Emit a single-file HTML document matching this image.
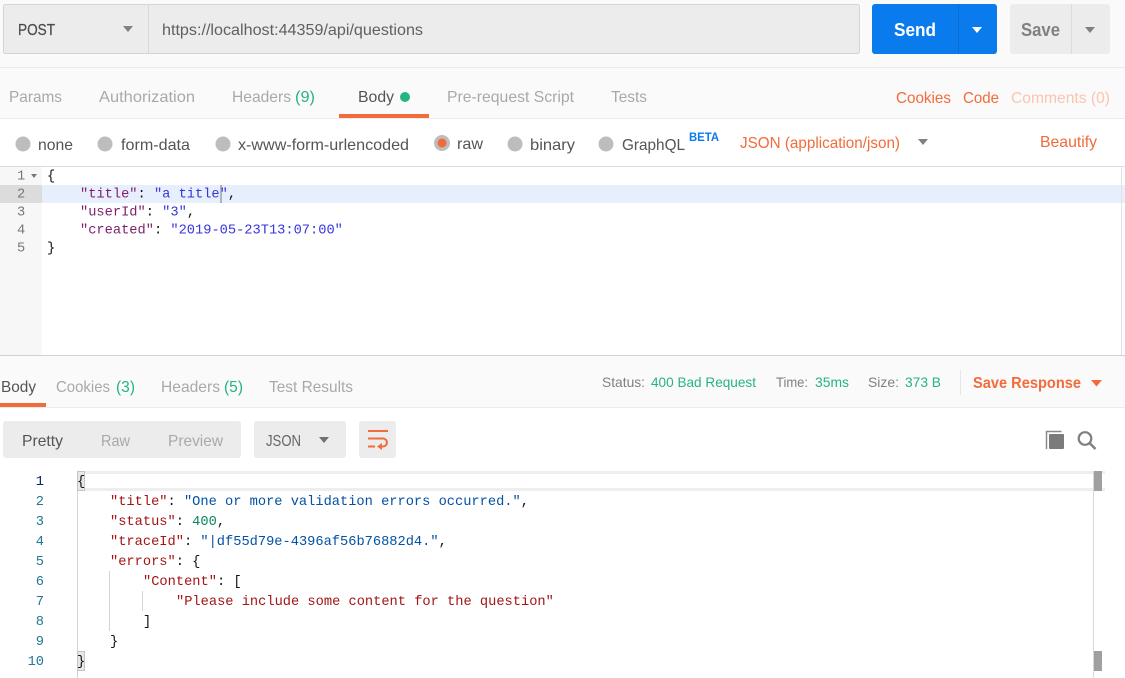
<!DOCTYPE html>
<html><head><meta charset="utf-8"><style>
html,body{margin:0;padding:0;background:#fff;width:1125px;height:678px;overflow:hidden}
svg{display:block}
text{white-space:pre}
.s{font-family:"Liberation Sans",sans-serif;font-size:16px}
.m{font-family:"Liberation Mono",monospace;font-size:13.7px}
.g{fill:#a9a9a9}.d{fill:#555}.o{fill:#f26b3a}.t{fill:#26b47f}
.pk{fill:#7f1d6a}.pv{fill:#3636dd}.k{fill:#a31515}.v{fill:#0451a5}.n{fill:#09885a}.b{fill:#111}
.ln{fill:#237893}
</style></head><body>
<svg width="1125" height="678" viewBox="0 0 1125 678" xmlns="http://www.w3.org/2000/svg">
<!-- top -->
<rect x="0" y="0" width="1125" height="118" fill="#fafafa"/>
<rect x="3.5" y="4.5" width="856" height="49" rx="2" fill="#ececec" stroke="#d4d4d4"/>
<rect x="148" y="5" width="1" height="48" fill="#d9d9d9"/>
<text class="s" x="18" y="35" fill="#4a4a4a" stroke="#4a4a4a" stroke-width="0.25" textLength="37" lengthAdjust="spacingAndGlyphs">POST</text>
<path d="M123 26h10l-5 6z" fill="#808080"/>
<text class="s" x="162" y="35" fill="#606060" textLength="261" lengthAdjust="spacingAndGlyphs">https://localhost:44359/api/questions</text>
<rect x="872" y="4" width="125" height="50" rx="3" fill="#097bed"/>
<rect x="958" y="4" width="1" height="50" fill="#0a6fd4"/>
<text class="s" x="894" y="36" fill="#fff" font-weight="bold" textLength="42" lengthAdjust="spacingAndGlyphs" style="font-size:18.500px">Send</text>
<path d="M972 27h10l-5 6z" fill="#fff"/>
<rect x="1010" y="4" width="100" height="50" rx="3" fill="#ececec"/>
<rect x="1071" y="4" width="1" height="50" fill="#dcdcdc"/>
<text class="s" x="1021" y="36" fill="#808080" font-weight="bold" textLength="39" lengthAdjust="spacingAndGlyphs" style="font-size:18.500px">Save</text>
<path d="M1085 27h10l-5 6z" fill="#808080"/>
<rect x="0" y="67" width="1125" height="1" fill="#ececec"/>
<rect x="0" y="118" width="1125" height="1" fill="#ececec"/>
<!-- tabs -->
<text class="s g" x="9" y="102" textLength="53" lengthAdjust="spacingAndGlyphs">Params</text>
<text class="s g" x="99" y="102" textLength="96" lengthAdjust="spacingAndGlyphs">Authorization</text>
<text class="s g" x="232" y="102" textLength="59" lengthAdjust="spacingAndGlyphs">Headers</text>
<text class="s t" x="295" y="102" textLength="20" lengthAdjust="spacingAndGlyphs">(9)</text>
<text class="s d" x="358" y="102" textLength="36" lengthAdjust="spacingAndGlyphs">Body</text>
<circle cx="405" cy="97" r="5" fill="#26b47f"/>
<rect x="339" y="114" width="90" height="4" fill="#f26b3a"/>
<text class="s g" x="447" y="102" textLength="127" lengthAdjust="spacingAndGlyphs">Pre-request Script</text>
<text class="s g" x="611" y="102" textLength="36" lengthAdjust="spacingAndGlyphs">Tests</text>
<text class="s o" x="896" y="103" textLength="55" lengthAdjust="spacingAndGlyphs">Cookies</text>
<text class="s o" x="963" y="103" textLength="36" lengthAdjust="spacingAndGlyphs">Code</text>
<text class="s" fill="#fbc4b0" x="1011" y="103" textLength="99" lengthAdjust="spacingAndGlyphs">Comments (0)</text>
<!-- radios -->
<circle cx="23" cy="144" r="7.5" fill="#bdbdbd"/>
<text class="s d" x="38" y="150" textLength="35" lengthAdjust="spacingAndGlyphs">none</text>
<circle cx="105" cy="144" r="7.5" fill="#bdbdbd"/>
<text class="s d" x="121" y="150" textLength="69" lengthAdjust="spacingAndGlyphs">form-data</text>
<circle cx="223" cy="144" r="7.5" fill="#bdbdbd"/>
<text class="s d" x="238" y="150" textLength="171" lengthAdjust="spacingAndGlyphs">x-www-form-urlencoded</text>
<circle cx="442" cy="143" r="8" fill="#bdbdbd"/><circle cx="442" cy="143" r="4.5" fill="#f26b3a"/>
<text class="s d" x="457" y="149" textLength="26" lengthAdjust="spacingAndGlyphs">raw</text>
<circle cx="515" cy="144" r="7.5" fill="#bdbdbd"/>
<text class="s d" x="530" y="150" textLength="45" lengthAdjust="spacingAndGlyphs">binary</text>
<circle cx="606" cy="144" r="7.5" fill="#bdbdbd"/>
<text class="s d" x="622" y="150" textLength="63" lengthAdjust="spacingAndGlyphs">GraphQL</text>
<text class="s" x="689" y="141" fill="#097bed" font-weight="bold" textLength="30" lengthAdjust="spacingAndGlyphs" style="font-size:12px">BETA</text>
<text class="s o" x="740" y="148" textLength="160" lengthAdjust="spacingAndGlyphs">JSON (application/json)</text>
<path d="M918 139h10l-5 6z" fill="#808080"/>
<text class="s o" x="1040" y="147" textLength="57" lengthAdjust="spacingAndGlyphs">Beautify</text>
<!-- request editor -->
<rect x="0" y="166" width="1125" height="1" fill="#dcdcdc"/>
<rect x="0" y="167" width="42" height="188" fill="#f7f7f7"/>
<rect x="0" y="185" width="42" height="18" fill="#dcdcdc"/>
<rect x="42" y="185" width="1083" height="18" fill="#e6effb"/>
<rect x="220" y="185" width="2" height="18" fill="#a9b4bf"/>
<g class="m" fill="#777">
<text x="17" y="179.500">1</text><text x="17" y="197.500">2</text><text x="17" y="215.500">3</text><text x="17" y="233.500">4</text><text x="17" y="251.500">5</text>
</g>
<path d="M31 174h6l-3 4z" fill="#777"/>
<text class="m b" x="47" y="179.500">{</text>
<text class="m" x="80" y="197.500"><tspan class="pk">"title"</tspan><tspan class="b">: </tspan><tspan class="pv">"a title"</tspan><tspan class="b">,</tspan></text>
<text class="m" x="80" y="215.500"><tspan class="pk">"userId"</tspan><tspan class="b">: </tspan><tspan class="pv">"3"</tspan><tspan class="b">,</tspan></text>
<text class="m" x="80" y="233.500"><tspan class="pk">"created"</tspan><tspan class="b">: </tspan><tspan class="pv">"2019-05-23T13:07:00"</tspan></text>
<text class="m b" x="47" y="251.500">}</text>
<rect x="0" y="355" width="1125" height="1" fill="#d2d2d2"/>
<rect x="1121" y="167" width="1" height="188" fill="#e2e2e2"/>
<!-- response bar -->
<rect x="0" y="356" width="1125" height="51" fill="#fafafa"/>
<rect x="0" y="407" width="1125" height="1" fill="#ececec"/>
<text class="s d" x="1" y="392" textLength="35" lengthAdjust="spacingAndGlyphs">Body</text>
<rect x="0" y="403" width="46" height="4" fill="#f26b3a"/>
<text class="s g" x="56" y="392" textLength="54" lengthAdjust="spacingAndGlyphs">Cookies</text>
<text class="s t" x="116" y="392" textLength="19" lengthAdjust="spacingAndGlyphs">(3)</text>
<text class="s g" x="161" y="392" textLength="59" lengthAdjust="spacingAndGlyphs">Headers</text>
<text class="s t" x="224" y="392" textLength="19" lengthAdjust="spacingAndGlyphs">(5)</text>
<text class="s g" x="269" y="392" textLength="84" lengthAdjust="spacingAndGlyphs">Test Results</text>
<g style="font-family:'Liberation Sans',sans-serif;font-size:14px">
<text x="602" y="387" fill="#808080" textLength="43" lengthAdjust="spacingAndGlyphs">Status:</text>
<text class="t" x="651" y="387" textLength="105" lengthAdjust="spacingAndGlyphs">400 Bad Request</text>
<text x="776" y="387" fill="#808080" textLength="32" lengthAdjust="spacingAndGlyphs">Time:</text>
<text class="t" x="815" y="387" textLength="34" lengthAdjust="spacingAndGlyphs">35ms</text>
<text x="868" y="387" fill="#808080" textLength="31" lengthAdjust="spacingAndGlyphs">Size:</text>
<text class="t" x="905" y="387" textLength="36" lengthAdjust="spacingAndGlyphs">373 B</text>
</g>
<rect x="960" y="370" width="1" height="25" fill="#e6e6e6"/>
<text class="s o" x="973" y="388" font-weight="bold" textLength="108" lengthAdjust="spacingAndGlyphs">Save Response</text>
<path d="M1091 380h11l-5.500 6.500z" fill="#f26b3a"/>
<!-- response toolbar -->
<rect x="3" y="421" width="238" height="37" rx="3" fill="#ececec"/>
<text class="s d" x="22" y="446" textLength="41" lengthAdjust="spacingAndGlyphs">Pretty</text>
<text class="s g" x="101" y="446" textLength="29" lengthAdjust="spacingAndGlyphs">Raw</text>
<text class="s g" x="168" y="446" textLength="55" lengthAdjust="spacingAndGlyphs">Preview</text>
<rect x="254" y="421" width="92" height="37" rx="3" fill="#ececec"/>
<text class="s" fill="#666" x="266" y="446" textLength="35" lengthAdjust="spacingAndGlyphs">JSON</text>
<path d="M319 437h10l-5 6z" fill="#707070"/>
<rect x="359" y="421" width="37" height="37" rx="3" fill="#ececec"/>
<path d="M368 431h20M368 438.500h15a4 4 0 0 1 0 8h-4M368 446.500h7" fill="none" stroke="#f26b3a" stroke-width="2"/>
<path d="M382 443v7l-5-3.500z" fill="#f26b3a"/>
<path d="M1046.500 449v-17.500h15" fill="none" stroke="#8a8a8a" stroke-width="1.500"/>
<rect x="1049" y="434" width="15" height="15" rx="1" fill="#7b7b7b"/>
<circle cx="1085" cy="438.500" r="6.300" fill="none" stroke="#808080" stroke-width="2.200"/>
<path d="M1090 443.500l5.500 5.500" stroke="#808080" stroke-width="2.500"/>
<!-- response editor -->
<rect x="84" y="471" width="1021" height="3" fill="#eee"/>
<rect x="84" y="488" width="1021" height="3" fill="#eee"/>
<rect x="77" y="471" width="1" height="207" fill="#d4d4d4"/>
<rect x="77.500" y="471.500" width="7" height="19" fill="#e8e8e8" stroke="#c4c4c4"/>
<rect x="77.500" y="651.500" width="7" height="19" fill="#e8e8e8" stroke="#c4c4c4"/>
<rect x="109" y="571" width="1" height="60" fill="#d4d4d4"/>
<rect x="142" y="591" width="1" height="20" fill="#d4d4d4"/>
<rect x="1093" y="471" width="1" height="207" fill="#d8d8d8"/>
<rect x="1094" y="471" width="8" height="20" fill="#a0a0a0"/>
<rect x="1094" y="651" width="8" height="20" fill="#a0a0a0"/>
<g class="m" text-anchor="end">
<text x="44" y="485" fill="#0b216f">1</text>
<text class="ln" x="44" y="505">2</text><text class="ln" x="44" y="525">3</text><text class="ln" x="44" y="545">4</text><text class="ln" x="44" y="565">5</text><text class="ln" x="44" y="585">6</text><text class="ln" x="44" y="605">7</text><text class="ln" x="44" y="625">8</text><text class="ln" x="44" y="645">9</text><text class="ln" x="44" y="665">10</text>
</g>
<text class="m b" x="77" y="485">{</text>
<text class="m" x="110" y="505"><tspan class="k">"title"</tspan><tspan class="b">: </tspan><tspan class="v">"One or more validation errors occurred."</tspan><tspan class="b">,</tspan></text>
<text class="m" x="110" y="525"><tspan class="k">"status"</tspan><tspan class="b">: </tspan><tspan class="n">400</tspan><tspan class="b">,</tspan></text>
<text class="m" x="110" y="545"><tspan class="k">"traceId"</tspan><tspan class="b">: </tspan><tspan class="v">"|df55d79e-4396af56b76882d4."</tspan><tspan class="b">,</tspan></text>
<text class="m" x="110" y="565"><tspan class="k">"errors"</tspan><tspan class="b">: {</tspan></text>
<text class="m" x="143" y="585"><tspan class="k">"Content"</tspan><tspan class="b">: [</tspan></text>
<text class="m k" x="176" y="605">"Please include some content for the question"</text>
<text class="m b" x="143" y="625">]</text>
<text class="m b" x="110" y="645">}</text>
<text class="m b" x="77" y="665">}</text>
</svg>
</body></html>
